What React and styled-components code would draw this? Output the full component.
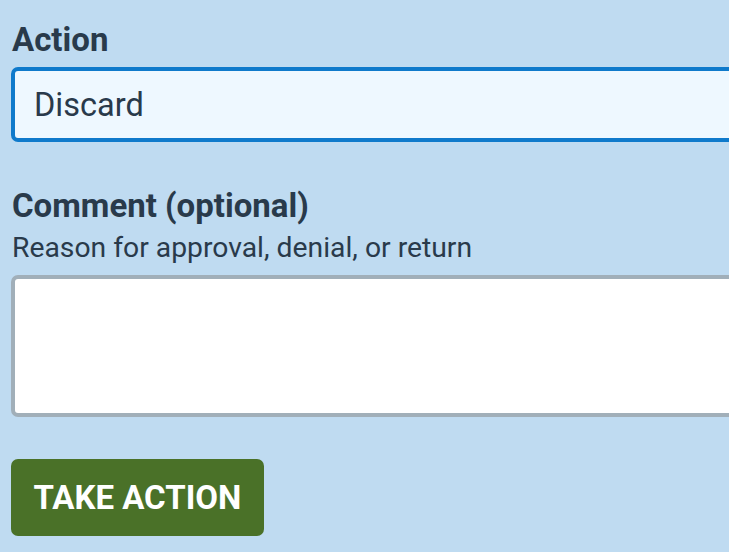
import React from 'react'
import styled, { createGlobalStyle } from 'styled-components'

const Global = createGlobalStyle`
  html, body {
    margin: 0;
    padding: 0;
    background: #bfdbf1;
    overflow: hidden;
  }
  body {
    font-family: Roboto, "Noto Sans", sans-serif;
    color: #293a4b;
  }
`

const Form = styled.form`
  width: 820px;
  padding: 20px 0 0 11px;
  display: flex;
  flex-direction: column;
`

const Field = styled.div`
  display: flex;
  flex-direction: column;
  margin-bottom: ${p => p.$gap || 0}px;
`

const Label = styled.label`
  font-size: 33px;
  font-weight: 700;
  line-height: 40px;
  padding-left: 1px;
  margin-bottom: ${p => p.$gap || 0}px;
`

const Hint = styled.div`
  font-size: 28.3px;
  line-height: 32px;
  padding-left: 1px;
  margin-bottom: 11px;
`

const Select = styled.div`
  box-sizing: border-box;
  height: 75px;
  border: 4px solid #0f7acb;
  border-radius: 7px;
  background: #eef8ff;
  font-size: 32.5px;
  display: flex;
  align-items: center;
  padding-left: 19px;
  color: #293a4b;
`

const TextArea = styled.textarea`
  box-sizing: border-box;
  height: 142px;
  border: 4px solid #a1afb9;
  border-radius: 7px;
  background: #fff;
  resize: none;
  font-family: inherit;
  font-size: 28px;
  outline: none;
`

const Button = styled.button`
  align-self: flex-start;
  box-sizing: border-box;
  width: 253px;
  height: 77px;
  padding: 0;
  border: none;
  border-radius: 7px;
  background: #4a7128;
  color: #fff;
  font-family: inherit;
  font-size: 33px;
  font-weight: 700;
  text-transform: uppercase;
`

export default function App() {
  return (
    <>
      <Global />
      <Form onSubmit={e => e.preventDefault()}>
        <Field $gap={44}>
          <Label $gap={7}>Action</Label>
          <Select>Discard</Select>
        </Field>
        <Field $gap={42}>
          <Label $gap={6}>Comment (optional)</Label>
          <Hint>Reason for approval, denial, or return</Hint>
          <TextArea />
        </Field>
        <Button type="submit">Take Action</Button>
      </Form>
    </>
  )
}
